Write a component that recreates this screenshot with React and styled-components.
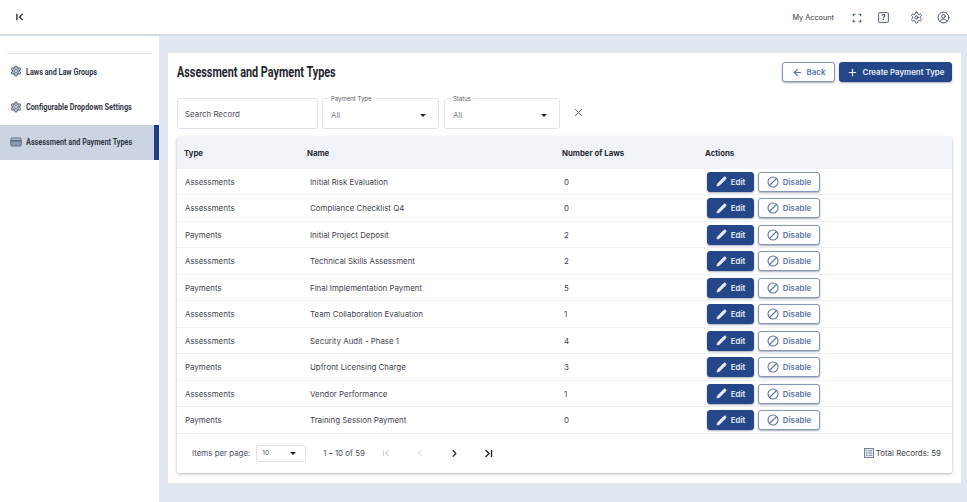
import React from "react";
import styled, { createGlobalStyle } from "styled-components";
import { ArrowLeft, ChevronLeft, ChevronRight, Pencil, Plus, X } from "lucide-react";

const Global = createGlobalStyle`
  html, body { margin: 0; padding: 0; background: #fff; }
  body { font-family: "Inter", "Liberation Sans", sans-serif; color: #30343b; overflow: hidden; }
  * { box-sizing: border-box; }
`;
const Page = styled.div`width: 967px; height: 502px; display: flex; flex-direction: column; background: #e1e8f0;`;
const Header = styled.header`
  height: 36px; flex: none; background: #fff; border-bottom: 2px solid #d3dbe5;
  display: flex; align-items: center; padding: 0 17px 0 16px;
`;
const Collapse = styled.svg`width: 8px; height: 8px; color: #2b3038;`;
const HeaderRight = styled.div`margin-left: auto; display: flex; align-items: center; color: #3c4c66; padding-top: 1px;`;
const Account = styled.span`font-size: 7.3px; color: #30343b; margin-right: 18px;`;
const HeadIcon = styled.svg`width: ${p => p.$s || 12}px; height: ${p => p.$s || 12}px; margin-left: ${p => p.$ml || 0}px; display: block;`;
const Body = styled.div`flex: 1; display: flex; min-height: 0;`;
const Sidebar = styled.nav`width: 159px; flex: none; background: #fff; padding: 17px 0 0;`;
const SideRule = styled.div`height: 1px; margin: 0 7px; background: #dfe5ee;`;
const SideItem = styled.div`
  height: 35.4px; display: flex; align-items: center; gap: 4px; padding: 0 0 1px 10px;
  background: ${p => p.$active ? "#cbd5e2" : "#fff"};
  border-right: ${p => p.$active ? "5px solid #1f3f88" : "none"};
`;
const Narrow = styled.span`
  display: inline-block; white-space: nowrap; transform: scaleX(${p => p.$x || .775}); transform-origin: left center;
  font-family: "Roboto", "Liberation Sans", sans-serif; font-weight: 700; font-size: ${p => p.$size || 9.4}px; color: ${p => p.$color || "#333a46"};
`;
const SideIcon = styled.svg`width: 12px; height: 12px; color: #5b6b83; flex: none;`;
const Main = styled.main`flex: 1; padding: 17px 6px 19px 9px; min-width: 0;`;
const Card = styled.section`height: 100%; background: #fff; padding: 9px 9px 10px; display: flex; flex-direction: column;`;
const TitleRow = styled.div`height: 20px; display: flex; align-items: center; justify-content: space-between;`;
const Title = styled.h1`margin: 0; display: flex; line-height: 1;`;
const Buttons = styled.div`display: flex; gap: 4px;`;
const Btn = styled.button`
  height: 20px; width: ${p => p.$w}px; padding: 0; border-radius: 3px; display: inline-flex; align-items: center; justify-content: center; gap: ${p => p.$gap || 4}px;
  font-family: "Inter", "Liberation Sans", sans-serif; font-size: 7.9px; font-weight: 600;
  background: ${p => p.$primary ? "#25478a" : "#fff"};
  color: ${p => p.$primary ? "#e8edf6" : "#5d75a3"};
  border: ${p => p.$primary ? "1px solid #25478a" : "1.4px solid #8497bb"};
  box-shadow: 0 1px 2px rgba(40,50,80,.4);
`;
const Filters = styled.div`display: flex; gap: 4px; margin-top: 16px; align-items: flex-start;`;
const Box = styled.div`
  position: relative; width: ${p => p.$w}px; height: 31px; margin-left: ${p => p.$ml || 0}px; border: 1px solid #dde4ed; border-radius: 3px;
  display: flex; align-items: center; padding: ${p => p.$search ? "0 7px" : "3px 12px 0 8px"}; justify-content: space-between;
  font-size: 7.9px; color: ${p => p.$search ? "#4a505a" : "#7c838e"};
`;
const Legend = styled.span`position: absolute; top: -4.5px; left: 6px; padding: 0 2px; background: #fff; font-size: 6px; line-height: 7px; color: #555c68;`;
const Caret = styled.i`
  width: 0; height: 0; border-left: 3.5px solid transparent; border-right: 3.5px solid transparent;
  border-top: 3px solid #22262d; display: block;
`;
const Clear = styled.div`margin: 8px 0 0 8px; color: #546a8c; display: flex;`;
const TableWrap = styled.div`flex: 1; margin-top: 8px; display: flex; flex-direction: column; box-shadow: 0 1px 3px rgba(30,40,60,.35); background: #fff; border-radius: 2px;`;
const Cols = `display: grid; grid-template-columns: 123px 255px 143px 1fr; align-items: center;`;
const THead = styled.div`${Cols} height: 31.8px; background: #f0f3f8; padding-left: 7px; font-size: 7.8px; font-weight: 700; color: #262b33;`;
const Row = styled.div`${Cols} height: 26.5px; padding-left: 8px; border-bottom: 1px solid #eef1f6; font-size: 7.9px; color: #40454e;`;
const NameCell = styled.span`padding-left: 2px;`;
const NumCell = styled.span`padding-left: 1px;`;
const Actions = styled.div`display: flex; gap: 4px; padding-left: 1px;`;
const Footer = styled.div`flex: 1; display: flex; align-items: center; padding: 0 11px 0 15px; font-size: 7.9px; color: #4a505a;`;
const PerPage = styled.div`
  width: 50px; height: 17px; margin-left: 6px; border: 1px solid #dde4ed; border-radius: 2px; display: flex; align-items: center; justify-content: space-between;
  padding: 0 9px 0 5px; font-size: 6.6px; color: #555c68;
`;
const Range = styled.span`margin-left: 17px; width: 46px; white-space: nowrap;`;
const Pager = styled.div`display: flex; align-items: center;`;
const PageBtn = styled.span`width: 34px; display: flex; justify-content: center; color: ${p => p.$off ? "#c8cdd5" : "#1f242c"};`;
const Total = styled.div`margin-left: auto; display: flex; align-items: center; gap: 2px; color: #3a3f48; font-size: 7.9px;`;

const rows = [
  ["Assessments", "Initial Risk Evaluation", 0],
  ["Assessments", "Compliance Checklist Q4", 0],
  ["Payments", "Initial Project Deposit", 2],
  ["Assessments", "Technical Skills Assessment", 2],
  ["Payments", "Final Implementation Payment", 5],
  ["Assessments", "Team Collaboration Evaluation", 1],
  ["Assessments", "Security Audit - Phase 1", 4],
  ["Payments", "Upfront Licensing Charge", 3],
  ["Assessments", "Vendor Performance", 1],
  ["Payments", "Training Session Payment", 0],
];

const GearPath = () => (
  <>
    <path d="M12.2 2h-.44a2 2 0 0 0-2 2v.18a2 2 0 0 1-1 1.73l-.43.25a2 2 0 0 1-2 0l-.15-.08a2 2 0 0 0-2.73.73l-.22.38a2 2 0 0 0 .73 2.73l.15.1a2 2 0 0 1 1 1.72v.51a2 2 0 0 1-1 1.74l-.15.09a2 2 0 0 0-.73 2.73l.22.38a2 2 0 0 0 2.73.73l.15-.08a2 2 0 0 1 2 0l.43.25a2 2 0 0 1 1 1.73V20a2 2 0 0 0 2 2h.44a2 2 0 0 0 2-2v-.18a2 2 0 0 1 1-1.73l.43-.25a2 2 0 0 1 2 0l.15.08a2 2 0 0 0 2.73-.73l.22-.39a2 2 0 0 0-.73-2.73l-.15-.08a2 2 0 0 1-1-1.74v-.5a2 2 0 0 1 1-1.74l.15-.09a2 2 0 0 0 .73-2.73l-.22-.38a2 2 0 0 0-2.73-.73l-.15.08a2 2 0 0 1-2 0l-.43-.25a2 2 0 0 1-1-1.73V4a2 2 0 0 0-2-2z" />
    <circle cx="12" cy="12" r="3" />
  </>
);
const svgProps = { viewBox: "0 0 24 24", fill: "none", stroke: "currentColor", strokeLinecap: "round", strokeLinejoin: "round" };

const Gear = () => <SideIcon {...svgProps} strokeWidth="2.2"><GearPath /><circle cx="12" cy="12" r="6.4" strokeWidth="1.6" /></SideIcon>;
const CardIco = () => (
  <SideIcon viewBox="0 0 24 24" fill="none">
    <rect x="1.500" y="4" width="21" height="16" rx="2.500" stroke="currentColor" strokeWidth="2" />
    <rect x="2" y="7.500" width="20" height="4" fill="currentColor" />
    <rect x="2" y="11.500" width="20" height="8" fill="currentColor" opacity=".55" />
  </SideIcon>
);
const DisableIco = () => (
  <svg width="12" height="12" viewBox="0 0 24 24" fill="none" stroke="currentColor" strokeWidth="2.2" strokeLinecap="round">
    <circle cx="12" cy="12" r="10" /><path d="M19 5 5 19" />
  </svg>
);

export default function App() {
  return (
    <>
      <Global />
      <Page>
        <Header>
          <Collapse viewBox="0 0 9 9" fill="none" stroke="currentColor" strokeWidth="1.500">
            <path d="M1 .8v7.400M7.600 1 4 4.500 7.600 8" />
          </Collapse>
          <HeaderRight>
            <Account>My Account</Account>
            <HeadIcon {...svgProps} $s={10} strokeWidth="2.6" strokeLinecap="butt">
              <path d="M3 8V3h5M16 3h5v5M21 16v5h-5M8 21H3v-5" />
            </HeadIcon>
            <HeadIcon viewBox="0 0 12 12" $s={11} $ml={16} fill="none">
              <rect x=".7" y=".7" width="10.600" height="10.600" rx=".8" stroke="currentColor" />
              <text x="6" y="9" textAnchor="middle" fontSize="8" fontWeight="700" fontFamily="Inter, sans-serif" fill="currentColor">?</text>
            </HeadIcon>
            <HeadIcon {...svgProps} $s={13} $ml={21} strokeWidth="1.8"><GearPath /></HeadIcon>
            <HeadIcon {...svgProps} $s={13} $ml={14} strokeWidth="1.8">
              <circle cx="12" cy="12" r="10" /><circle cx="12" cy="10" r="3.200" /><path d="M6.200 19c1-2.600 3.200-4 5.800-4s4.800 1.400 5.800 4" />
            </HeadIcon>
          </HeaderRight>
        </Header>
        <Body>
          <Sidebar>
            <SideRule />
            <SideItem><Gear /><Narrow>Laws and Law Groups</Narrow></SideItem>
            <SideItem><Gear /><Narrow>Configurable Dropdown Settings</Narrow></SideItem>
            <SideItem $active><CardIco /><Narrow>Assessment and Payment Types</Narrow></SideItem>
          </Sidebar>
          <Main>
            <Card>
              <TitleRow>
                <Title><Narrow $size={14} $color="#1f2530">Assessment and Payment Types</Narrow></Title>
                <Buttons>
                  <Btn $w={53}><ArrowLeft size={11} strokeWidth={2.4} />Back</Btn>
                  <Btn $primary $w={113} $gap={5}><Plus size={11} strokeWidth={2.6} />Create Payment Type</Btn>
                </Buttons>
              </TitleRow>
              <Filters>
                <Box $search $w={141}>Search Record</Box>
                <Box $w={117}><Legend>Payment Type</Legend>All<Caret /></Box>
                <Box $w={116} $ml={1}><Legend>Status</Legend>All<Caret /></Box>
                <Clear><X size={13} strokeWidth={1.7} /></Clear>
              </Filters>
              <TableWrap>
                <THead><span>Type</span><span>Name</span><span>Number of Laws</span><span>Actions</span></THead>
                {rows.map(([t, n, c]) => (
                  <Row key={n}>
                    <span>{t}</span>
                    <NameCell>{n}</NameCell>
                    <NumCell>{c}</NumCell>
                    <Actions>
                      <Btn $primary $w={47}><Pencil size={11} fill="currentColor" strokeWidth={1.500} />Edit</Btn>
                      <Btn $w={62}><DisableIco />Disable</Btn>
                    </Actions>
                  </Row>
                ))}
                <Footer>
                  Items per page:
                  <PerPage>10<Caret /></PerPage>
                  <Range>1 – 10 of 59</Range>
                  <Pager>
                    <PageBtn $off><svg width="8" height="8" viewBox="0 0 9 9" fill="none" stroke="currentColor" strokeWidth="1.200"><path d="M1.500 1v7M7.500 1 4 4.500 7.500 8" /></svg></PageBtn>
                    <PageBtn $off><ChevronLeft size={10} /></PageBtn>
                    <PageBtn><ChevronRight size={11} strokeWidth={2.600} /></PageBtn>
                    <PageBtn><svg width="9" height="9" viewBox="0 0 9 9" fill="none" stroke="currentColor" strokeWidth="1.400"><path d="M7.500 1v7M1.500 1 5 4.500 1.500 8" /></svg></PageBtn>
                  </Pager>
                  <Total>
                    <svg width="10" height="10" viewBox="0 0 11 11" fill="#e8ecf2" stroke="#5a6b84" strokeWidth=".9"><rect x=".5" y=".5" width="10" height="10" /><path d="M2 3h2M5 3h4M2 5.500h2M5 5.500h4M2 8h2M5 8h4" /></svg>
                    Total Records: 59
                  </Total>
                </Footer>
              </TableWrap>
            </Card>
          </Main>
        </Body>
      </Page>
    </>
  );
}
